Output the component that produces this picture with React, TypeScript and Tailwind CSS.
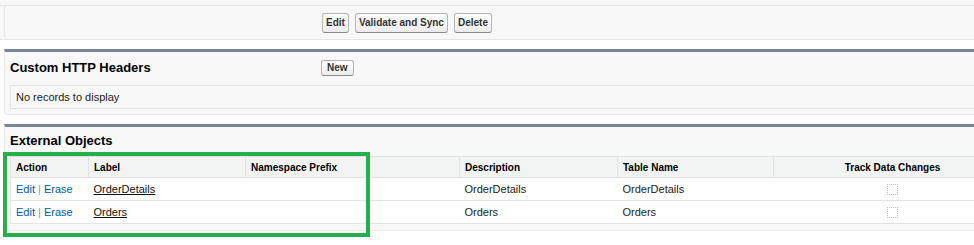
const rows = [
  { label: "OrderDetails", description: "OrderDetails", table: "OrderDetails" },
  { label: "Orders", description: "Orders", table: "Orders" },
];

function Btn({ children, tall }: { children: string; tall?: boolean }) {
  return (
    <button
      className={`rounded-[3px] border border-[#b5b5b5] border-b-[#8a8a8a] bg-gradient-to-b from-white to-[#ececec] text-[10px] font-bold leading-[12px] text-[#333] ${
        tall ? "px-[3px] py-[3px]" : "px-[5px] py-[1px]"
      }`}
    >
      {children}
    </button>
  );
}

export default function App() {
  return (
    <div className="relative h-[245px] w-[974px] overflow-hidden bg-white font-['Liberation_Sans',Arial,sans-serif] text-[11px] text-[#222]">
      {/* Detail buttons panel */}
      <div className="h-[40px] w-[1020px] border-b border-[#e6e6e6] bg-[#f8f8f8]">
        <div className="h-[6px] border-b border-[#e4e4e4]" />
        <div className="ml-[4px] flex h-[33px] items-center gap-[6px] rounded-bl-[4px] border-l border-[#e6e6e6] pl-[317px]">
          <Btn tall>Edit</Btn>
          <Btn tall>Validate and Sync</Btn>
          <Btn tall>Delete</Btn>
        </div>
      </div>

      {/* Custom HTTP Headers */}
      <div className="ml-[4px] mt-[9px] w-[1020px] rounded-b-[4px] border-x border-b border-t-[3px] border-[#eaeaea] border-t-[#7d8499] bg-[#f8f8f8] px-[5px] pb-[5px]">
        <div className="flex h-[33px] items-center pb-[2px]">
          <h3 className="w-[311px] text-[13px] font-bold text-black">Custom HTTP Headers</h3>
          <Btn>New</Btn>
        </div>
        <div className="flex h-[24px] items-center border border-[#e0e3e5] px-[5px]">
          No records to display
        </div>
      </div>

      {/* External Objects */}
      <div className="ml-[4px] mt-[9px] w-[1020px] rounded-b-[4px] border-x border-b border-t-[3px] border-[#eaeaea] border-t-[#7d8499] bg-[#f8f8f8] px-[5px] pb-[6px]">
        <div className="flex h-[29px] items-center pb-[2px]">
          <h3 className="text-[13px] font-bold text-black">External Objects</h3>
        </div>
        <table className="w-[1001px] table-fixed border-collapse border border-[#e0e3e5] bg-white">
          <colgroup>
            <col className="w-[78px]" />
            <col className="w-[157px]" />
            <col className="w-[214px]" />
            <col className="w-[158px]" />
            <col className="w-[156px]" />
            <col className="w-[238px]" />
          </colgroup>
          <thead>
            <tr className="h-[21px] bg-[#f2f3f3] text-[10px] font-bold text-black">
              <th className="border-b border-[#e0e3e5] px-[5px] text-left">Action</th>
              <th className="border-b border-l border-[#e0e3e5] px-[5px] text-left">Label</th>
              <th className="border-b border-l border-[#e0e3e5] px-[5px] text-left">Namespace Prefix</th>
              <th className="border-b border-l border-[#e0e3e5] px-[5px] text-left">Description</th>
              <th className="border-b border-l border-[#e0e3e5] px-[5px] text-left">Table Name</th>
              <th className="border-b border-l border-[#e0e3e5] px-[5px] text-center">Track Data Changes</th>
            </tr>
          </thead>
          <tbody>
            {rows.map((r) => (
              <tr key={r.label} className="h-[23px] border-b border-[#e3e3e3]">
                <td className="px-[5px] text-[#015ba7]">
                  Edit <span className="text-[#7a9cc0]">|</span> Erase
                </td>
                <td className="px-[5px]">
                  <span className="text-[#111] underline">{r.label}</span>
                </td>
                <td className="px-[5px]" />
                <td className="px-[5px]">{r.description}</td>
                <td className="px-[5px]">{r.table}</td>
                <td className="px-[5px] text-center">
                  <span className="inline-block h-[11px] w-[11px] border border-dotted border-[#c4c4c4] align-middle" />
                </td>
              </tr>
            ))}
          </tbody>
        </table>
      </div>

      {/* Highlight box */}
      <div className="absolute left-[3px] top-[152px] h-[85px] w-[367px] border-4 border-[#22b14c]" />
    </div>
  );
}
